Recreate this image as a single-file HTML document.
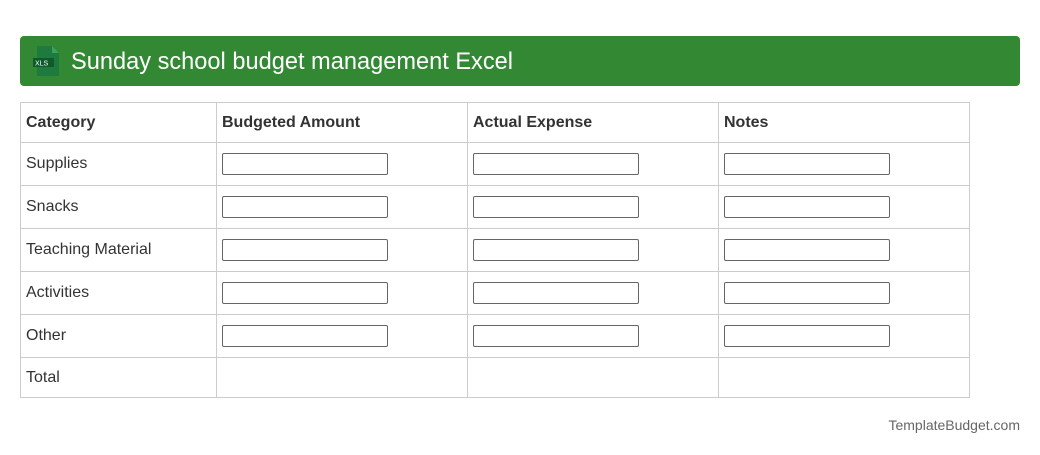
<!DOCTYPE html>
<html><head><meta charset="utf-8"><style>
body{margin:0;width:1040px;height:455px;background:#fff;font-family:"Liberation Sans",sans-serif;position:relative;overflow:hidden}
.bar{position:absolute;left:20px;top:36px;width:1000px;height:50px;background:#338833;border-radius:4px}
.bar .t{position:absolute;left:51px;top:12px;color:#fff;font-size:23.6px;line-height:28px}
.icon{position:absolute;left:12px;top:10px}
table{position:absolute;left:20px;top:102px;border-collapse:collapse;font-size:16px;color:#333}
td{border:1px solid #ccc;padding:0 5px;vertical-align:middle}
tr{height:43px}
tr.h{height:40px}tr.l{height:40px}
th{border:1px solid #ccc;text-align:left;padding:0 5px;font-weight:bold}
.i{width:164px;height:20px;border:1px solid #666;border-radius:2px}
.f{position:absolute;right:20px;top:417px;font-size:14px;color:#666}
</style></head><body>
<div class="bar">
<svg class="icon" width="30" height="30" viewBox="0 0 30 30"><path d="M5 0H20L27 7V30H5Z" fill="#1e7a3e"/><path d="M20 0V7H27Z" fill="#3aa35a"/><rect x="1" y="12" width="21" height="9" fill="#0f5a2a"/><text x="3" y="19.5" font-size="7" fill="#fff" font-family="Liberation Sans">XLS</text></svg>
<div class="t">Sunday school budget management Excel</div></div>
<table>
<tr class="h"><th style="width:185px">Category</th><th style="width:240px">Budgeted Amount</th><th style="width:240px">Actual Expense</th><th style="width:240px">Notes</th></tr>
<tr><td>Supplies</td><td><div class="i"></div></td><td><div class="i"></div></td><td><div class="i"></div></td></tr>
<tr><td>Snacks</td><td><div class="i"></div></td><td><div class="i"></div></td><td><div class="i"></div></td></tr>
<tr><td>Teaching Material</td><td><div class="i"></div></td><td><div class="i"></div></td><td><div class="i"></div></td></tr>
<tr><td>Activities</td><td><div class="i"></div></td><td><div class="i"></div></td><td><div class="i"></div></td></tr>
<tr><td>Other</td><td><div class="i"></div></td><td><div class="i"></div></td><td><div class="i"></div></td></tr>
<tr class="l"><td>Total</td><td></td><td></td><td></td></tr>
</table>
<div class="f">TemplateBudget.com</div>
</body></html>
